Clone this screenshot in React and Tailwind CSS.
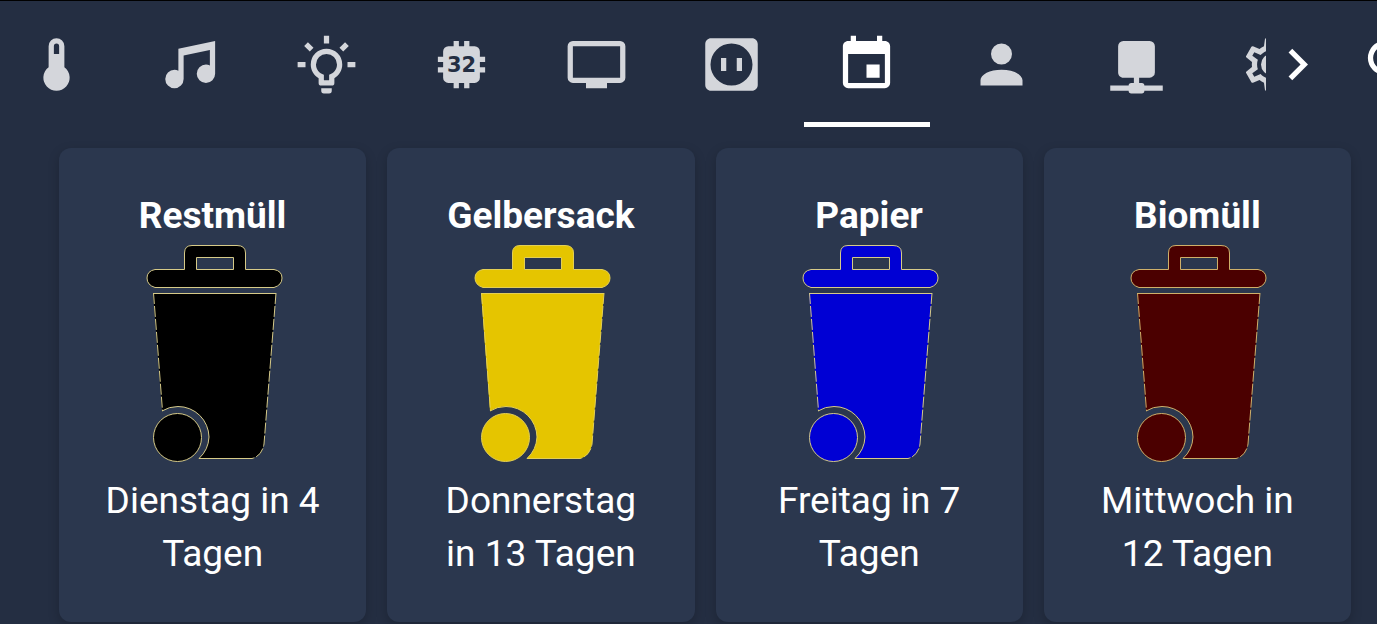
import { useState } from "react";

const tabs = [
  {
    id: "climate",
    label: "Klima",
    path: "M15 13V5A3 3 0 0 0 9 5V13A5 5 0 1 0 15 13M12 4A1 1 0 0 1 13 5V8H11V5A1 1 0 0 1 12 4Z"
  },
  {
    id: "music",
    label: "Musik",
    path: "M21,3V15.5A3.5,3.5 0 0,1 17.5,19A3.5,3.5 0 0,1 14,15.5A3.5,3.5 0 0,1 17.5,12C18.04,12 18.55,12.12 19,12.34V6.47L9,8.6V17.5A3.5,3.5 0 0,1 5.5,21A3.5,3.5 0 0,1 2,17.5A3.5,3.5 0 0,1 5.5,14C6.04,14 6.55,14.12 7,14.34V6L21,3Z"
  },
  {
    id: "light",
    label: "Licht",
    path: "M20,11H23V13H20V11M1,11H4V13H1V11M13,1V4H11V1H13M4.92,3.5L7.05,5.64L5.63,7.05L3.5,4.93L4.92,3.5M16.95,5.63L19.07,3.5L20.5,4.93L18.37,7.05L16.95,5.63M12,6A6,6 0 0,1 18,12C18,14.22 16.79,16.16 15,17.2V19A1,1 0 0,1 14,20H10A1,1 0 0,1 9,19V17.2C7.21,16.16 6,14.22 6,12A6,6 0 0,1 12,6M14,21V22A1,1 0 0,1 13,23H11A1,1 0 0,1 10,22V21H14M11,18H13V15.87C14.73,15.43 16,13.86 16,12A4,4 0 0,0 12,8A4,4 0 0,0 8,12C8,13.86 9.27,15.43 11,15.87V18Z"
  },
  {
    id: "system",
    label: "System",
    text: "32",
    path: "M9,3H11V5H13V3H15V5H17A2,2 0 0,1 19,7V9H21V11H19V13H21V15H19V17A2,2 0 0,1 17,19H15V21H13V19H11V21H9V19H7A2,2 0 0,1 5,17V15H3V13H5V11H3V9H5V7A2,2 0 0,1 7,5H9V3Z"
  },
  {
    id: "tv",
    label: "Fernseher",
    path: "M21,17H3V5H21M21,3H3A2,2 0 0,0 1,5V17A2,2 0 0,0 3,19H8V21H16V19H21A2,2 0 0,0 23,17V5A2,2 0 0,0 21,3Z"
  },
  {
    id: "power",
    label: "Steckdosen",
    path: "M4.22,2H19.78C21,2 22,3 22,4.22V19.78C22,21 21,22 19.78,22H4.22C3,22 2,21 2,19.78V4.22C2,3 3,2 4.22,2M12,4A8,8 0 0,0 4,12A8,8 0 0,0 12,20A8,8 0 0,0 20,12A8,8 0 0,0 12,4M8,9.5H10V14.5H8V9.5M14,9.5H16V14.5H14V9.5Z"
  },
  {
    id: "calendar",
    label: "Kalender",
    path: "M19,19H5V8H19M16,1V3H8V1H6V3H5C3.89,3 3,3.89 3,5V19A2,2 0 0,0 5,21H19A2,2 0 0,0 21,19V5C21,3.89 20.1,3 19,3H18V1M17,12H12V17H17V12Z"
  },
  {
    id: "person",
    label: "Personen",
    path: "M12,4A4,4 0 0,1 16,8A4,4 0 0,1 12,12A4,4 0 0,1 8,8A4,4 0 0,1 12,4M12,14C16.42,14 20,15.79 20,18V20H4V18C4,15.79 7.58,14 12,14Z"
  },
  {
    id: "network",
    label: "Netzwerk",
    path: "M17,3A2,2 0 0,1 19,5V15A2,2 0 0,1 17,17H13V19H14A1,1 0 0,1 15,20H22V22H15A1,1 0 0,1 14,23H10A1,1 0 0,1 9,22H2V20H9A1,1 0 0,1 10,19H11V17H7C5.89,17 5,16.1 5,15V5A2,2 0 0,1 7,3H17Z"
  },
  {
    id: "settings",
    label: "Einstellungen",
    path: "M12,8A4,4 0 0,1 16,12A4,4 0 0,1 12,16A4,4 0 0,1 8,12A4,4 0 0,1 12,8M12,10A2,2 0 0,0 10,12A2,2 0 0,0 12,14A2,2 0 0,0 14,12A2,2 0 0,0 12,10M10,22C9.75,22 9.54,21.82 9.5,21.58L9.13,18.93C8.5,18.68 7.96,18.34 7.44,17.94L4.95,18.95C4.73,19.03 4.46,18.95 4.34,18.73L2.34,15.27C2.21,15.05 2.27,14.78 2.46,14.63L4.57,12.97L4.5,12L4.57,11L2.46,9.37C2.27,9.22 2.21,8.95 2.34,8.73L4.34,5.27C4.46,5.05 4.73,4.96 4.95,5.05L7.44,6.05C7.96,5.66 8.5,5.32 9.13,5.07L9.5,2.42C9.54,2.18 9.75,2 10,2H14C14.25,2 14.46,2.18 14.5,2.42L14.87,5.07C15.5,5.32 16.04,5.66 16.56,6.05L19.05,5.05C19.27,4.96 19.54,5.05 19.66,5.27L21.66,8.73C21.79,8.95 21.73,9.22 21.54,9.37L19.43,11L19.5,12L19.43,13L21.54,14.63C21.73,14.78 21.79,15.05 21.66,15.27L19.66,18.73C19.54,18.95 19.27,19.04 19.05,18.95L16.56,17.95C16.04,18.34 15.5,18.68 14.87,18.93L14.5,21.58C14.46,21.82 14.25,22 14,22H10M11.25,4L10.88,6.61C9.68,6.86 8.62,7.5 7.85,8.39L5.44,7.35L4.69,8.65L6.8,10.2C6.4,11.37 6.4,12.64 6.8,13.8L4.68,15.36L5.43,16.66L7.86,15.62C8.63,16.5 9.68,17.14 10.87,17.38L11.24,20H12.76L13.13,17.39C14.32,17.14 15.37,16.5 16.14,15.62L18.57,16.66L19.32,15.36L17.2,13.81C17.6,12.64 17.6,11.37 17.2,10.2L19.31,8.65L18.56,7.35L16.15,8.39C15.38,7.5 14.32,6.86 13.12,6.62L12.75,4H11.25Z"
  }
];

const chevronRight = "M8.59,16.58L13.17,12L8.59,7.41L10,6L16,12L10,18L8.59,16.58Z";
const magnify = "M9.5,3A6.5,6.5 0 0,1 16,9.5C16,11.11 15.41,12.59 14.44,13.73L14.71,14H15.5L20.5,19L19,20.5L14,15.5V14.71L13.73,14.44C12.59,15.41 11.11,16 9.5,16A6.5,6.5 0 0,1 3,9.5A6.5,6.5 0 0,1 9.5,3M9.5,5C7,5 5,7 5,9.5C5,12 7,14 9.5,14C12,14 14,12 14,9.5C14,7 12,5 9.5,5Z";

const bins = [
  { name: "Restmüll", due: "Dienstag in 4 Tagen", fill: "#000000", edge: "#d6ca88" },
  { name: "Gelbersack", due: "Donnerstag in 13 Tagen", fill: "#e5c500", edge: "#e3cf55" },
  { name: "Papier", due: "Freitag in 7 Tagen", fill: "#0000d4", edge: "#d6ca88" },
  { name: "Biomüll", due: "Mittwoch in 12 Tagen", fill: "#4b0000", edge: "#cfb06a" }
];

function Icon({ path, text }) {
  return (
    <svg viewBox="0 0 24 24" className="w-[63px] h-[63px] shrink-0" fill="currentColor" aria-hidden="true">
      <path fillRule="evenodd" d={path} />
      {text && (
        <text
          x="12"
          y="15"
          textAnchor="middle"
          fontSize="8"
          className="font-['DejaVu_Sans'] font-bold fill-[#242e42]"
        >
          {text}
        </text>
      )}
    </svg>
  );
}

function Bin({ fill, edge }) {
  return (
    <svg viewBox="0 -1 140 232" className="w-[140px] h-[232px]" fill={fill} stroke={edge} aria-hidden="true">
      {/* lid with handle */}
      <path
        fillRule="evenodd"
        d="M41.5,26.5V10Q41.5,2.5 49,2.5H94Q102.5,2.5 102.5,10V26.5H131Q139,28 139,35Q139,42 131,44.5H12Q4,42 4,35Q4,28 12,26.5ZM53.5,14.5V26.5H90.5V14.5Z"
      />
      {/* body */}
      <path stroke="none" d="M10,50H133L121,201Q119,213 109,215.5H56A31,31 0 0 0 66,194A31,31 0 0 0 35,163.5Q26,163.5 19,168Z" />
      <path fill="none" d="M10,50.5H133M109,215.5H56A31,31 0 0 0 66,194A31,31 0 0 0 35,163.5Q26,163.5 19,168" />
      <path fill="none" strokeDasharray="11 2" d="M10.5,50L19.5,168M133,50L121,201Q119,213 109,215.5" />
      {/* wheel */}
      <circle cx="34.5" cy="194.5" r="24" />
    </svg>
  );
}

function App() {
  const [active, setActive] = useState("calendar");

  return (
    <div className="min-h-screen overflow-hidden bg-[#242e42] border-t border-black text-white font-['Roboto',sans-serif]">

      {/* HEADER */}
      <header className="flex items-start overflow-hidden">
        <div role="tablist" className="flex flex-1 min-w-0 overflow-hidden">
          {tabs.map((tab, i) => (
            <button
              key={tab.id}
              role="tab"
              aria-label={tab.label}
              aria-selected={active === tab.id}
              onClick={() => setActive(tab.id)}
              className={`flex flex-col items-center shrink-0 w-[135px] pt-8 ${i === 0 ? "-ml-[11px]" : ""} ${active === tab.id ? "text-white" : "text-[#d4d6db]"}`}
            >
              <Icon path={tab.path} text={tab.text} />
              <span className={`mt-[26px] h-[5px] w-[126px] ${active === tab.id ? "bg-white" : ""}`} />
            </button>
          ))}
        </div>

        <button aria-label="Weiter" className="pt-8 shrink-0">
          <Icon path={chevronRight} />
        </button>
        <button aria-label="Suche" className="pt-8 ml-[31px] -mr-[46px] shrink-0">
          <Icon path={magnify} />
        </button>
      </header>

      {/* CARDS */}
      <main className="grid grid-cols-4 gap-[21px] pt-[21px] pl-[59px] pr-[26px]">
        {bins.map((bin) => (
          <section
            key={bin.name}
            className="flex flex-col items-center px-[42px] pt-[41px] pb-[42px] rounded-xl bg-[#2b374e] shadow-[0_4px_12px_rgba(0,0,0,0.2)] text-[37px] leading-[53px] text-center"
          >
            <h2 className="font-bold">{bin.name}</h2>
            <Bin fill={bin.fill} edge={bin.edge} />
            <p>{bin.due}</p>
          </section>
        ))}
      </main>

    </div>
  );
}

export default App;
